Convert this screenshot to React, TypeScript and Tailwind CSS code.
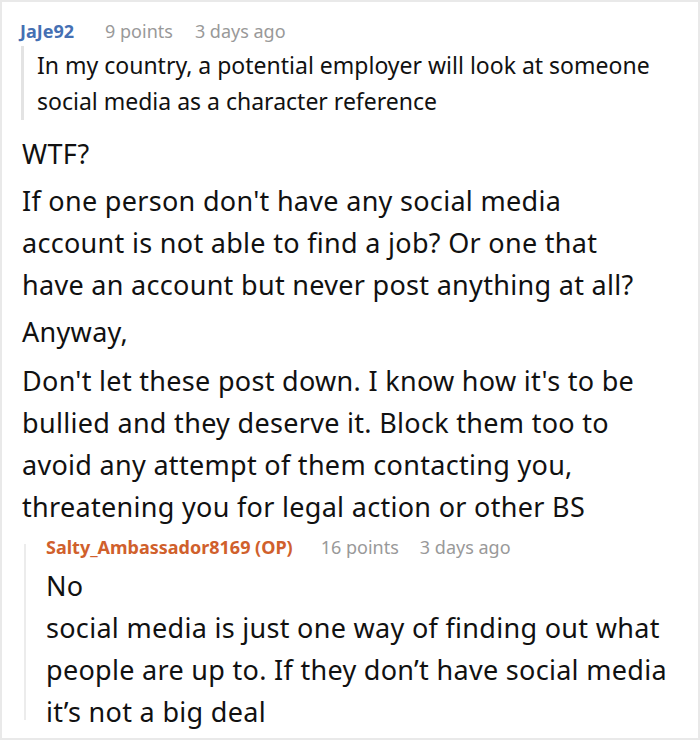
export default function App() {
  const font = { fontFamily: '"Noto Sans", "Open Sans", sans-serif' };
  return (
    <div style={font} className="w-[700px] h-[740px] bg-white border-2 border-[#e9e9e9] overflow-hidden text-[#111]">
      <div className="pl-[18px] pt-[16px] pr-[10px]">
        <div className="flex items-center text-[18px] leading-[26px] h-[26px]">
          <span className="font-bold text-[#4570b3]">JaJe92</span>
          <span className="ml-[31px] text-[#999]">9 points</span>
          <span className="ml-[22px] text-[#999]">3 days ago</span>
        </div>
        <div className="mt-[2px] ml-[1px] border-l-[3px] border-[#e3e3e3] pl-[13px] text-[23px] leading-[36px] py-[1px]">
          In my country, a potential employer will look at someone
          <br />
          social media as a character reference
        </div>
        <div className="text-[27px] leading-[42px] tracking-[0.3px] mt-[13px] ml-[2px] flex flex-col gap-[5px]">
          <p>WTF?</p>
          <p>
            If one person don't have any social media
            <br />
            account is not able to find a job? Or one that
            <br />
            have an account but never post anything at all?
          </p>
          <p>Anyway,</p>
          <p className="mt-[2px]">
            Don't let these post down. I know how it's to be
            <br />
            bullied and they deserve it. Block them too to
            <br />
            avoid any attempt of them contacting you,
            <br />
            threatening you for legal action or other BS
          </p>
        </div>
        <div className="mt-[6px] flex">
          <div className="ml-[4px] w-[2px] bg-[#ececec] mt-[10px] mb-[13px]" />
          <div className="pl-[20px]">
            <div className="flex items-center text-[18px] leading-[26px] h-[26px]">
              <span className="font-bold text-[#d0602c]">Salty_Ambassador8169 (OP)</span>
              <span className="ml-[28px] text-[#999]">16 points</span>
              <span className="ml-[21px] text-[#999]">3 days ago</span>
            </div>
            <p className="text-[27px] leading-[42px] tracking-[0.3px] mt-[5px]">
              No
              <br />
              social media is just one way of finding out what
              <br />
              people are up to. If they don’t have social media
              <br />
              it’s not a big deal
            </p>
          </div>
        </div>
      </div>
    </div>
  );
}
